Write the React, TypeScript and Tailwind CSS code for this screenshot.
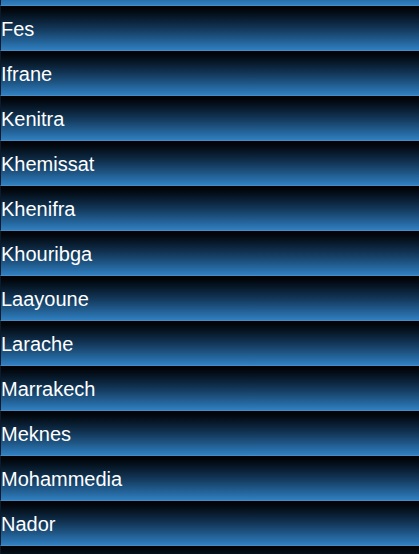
const cities = [
  "Essaouira",
  "Fes",
  "Ifrane",
  "Kenitra",
  "Khemissat",
  "Khenifra",
  "Khouribga",
  "Laayoune",
  "Larache",
  "Marrakech",
  "Meknes",
  "Mohammedia",
  "Nador",
  "Ouarzazate",
];

export default function App() {
  return (
    <div className="h-[554px] overflow-hidden bg-black font-['Liberation_Sans',Arial,sans-serif]">
      <ul className="-mt-[39px]">
        {cities.map((city) => (
          <li
            key={city}
            className="h-[45px] border-b border-l border-b-[#4b8bc3] border-l-[#0b1b2c] bg-gradient-to-b from-[#010203] via-[#123657] to-[#2f80c2] text-[20px] leading-[46px] text-white"
          >
            {city}
          </li>
        ))}
      </ul>
    </div>
  );
}
